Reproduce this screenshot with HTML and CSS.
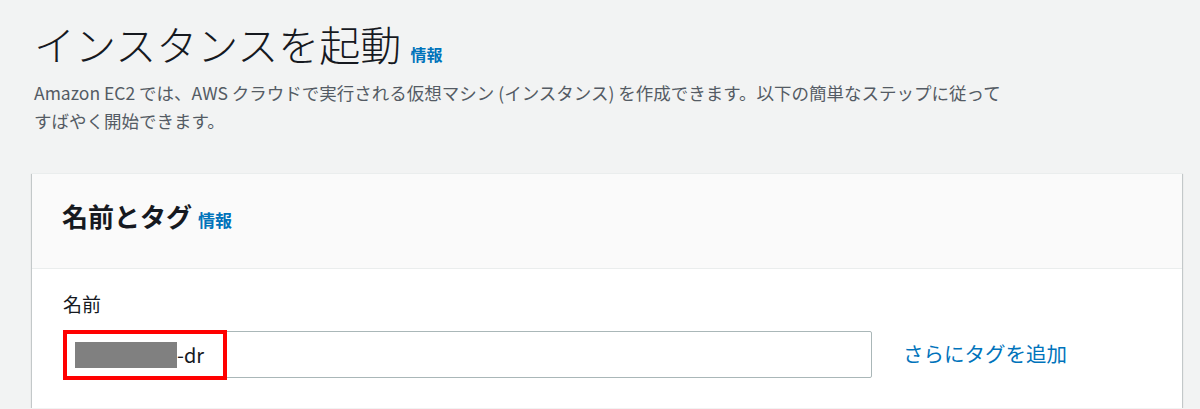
FILE: index.html
```html
<!DOCTYPE html>
<html>
<head>
    <title>インスタンスを起動</title>
    <link rel="stylesheet" href="styles.css">
</head>
<body>

    <div class="page">
        <h1 class="title">インスタンスを起動 <a class="info" href="#">情報</a></h1>
        <p class="desc">Amazon EC2 では、AWS クラウドで実行される仮想マシン (インスタンス) を作成できます。以下の簡単なステップに従って<br>すばやく開始できます。</p>

        <div class="card">
            <div class="card-head">
                <h2>名前とタグ <a class="info small" href="#">情報</a></h2>
            </div>
            <div class="card-body">
                <label class="label">名前</label>
                <div class="row">
                    <div class="field">
                        <div class="textbox">
                            <span class="redact"></span>-dr
                        </div>
                        <div class="mark"></div>
                    </div>
                    <a class="more" href="#">さらにタグを追加</a>
                </div>
            </div>
        </div>
    </div>

</body>
</html>
```

FILE: styles.css
```css
body {
    margin: 0;
    background: #f2f3f3;
    font-family: "Noto Sans CJK JP", "Noto Sans", sans-serif;
    color: #16191f;
}

.page {
    padding: 20px 18px 0 32px;
}

.title {
    margin: 0 0 0 2px;
    font-size: 41px;
    font-weight: 300;
    line-height: 46px;
}

.info {
    color: #0073bb;
    text-decoration: none;
    font-size: 16px;
    font-weight: bold;
    letter-spacing: 0;
}

.info.small {
    font-size: 17px;
}

.desc {
    margin: 2px 0 0 2px;
    font-size: 17.5px;
    line-height: 28px;
    color: #545b64;
}

.card {
    margin-top: 38px;
    background: #fff;
    border-top: 1px solid #eaeded;
    box-shadow: 0 1px 1px 0 rgba(0, 28, 36, 0.3), 1px 1px 1px 0 rgba(0, 28, 36, 0.15), -1px 1px 1px 0 rgba(0, 28, 36, 0.15);
}

.card-head {
    height: 94px;
    background: #fafafa;
    border-bottom: 1px solid #eaeded;
    padding: 0 30px;
    display: flex;
    align-items: center;
}

.card-head h2 {
    margin: 0 0 12px;
    font-size: 26px;
    font-weight: bold;
}

.card-body {
    padding: 21px 30px 30px 31px;
}

.label {
    display: block;
    font-size: 19px;
    line-height: 28px;
}

.row {
    margin-top: 13px;
    display: flex;
    align-items: center;
    gap: 31px;
}

.field {
    position: relative;
    width: 809px;
}

.textbox {
    height: 45px;
    border: 1px solid #aab7b8;
    border-radius: 2px;
    background: #fff;
    display: flex;
    align-items: center;
    padding-left: 11px;
    font-size: 20px;
    color: #16191f;
}

.redact {
    display: inline-block;
    width: 102px;
    height: 26px;
    background: #808080;
}

.mark {
    position: absolute;
    left: 0;
    top: -1px;
    width: 156px;
    height: 42px;
    border: 4px solid #ff0000;
}

.more {
    color: #0073bb;
    text-decoration: none;
    font-size: 20.5px;
    margin-top: -4px;
}
```
